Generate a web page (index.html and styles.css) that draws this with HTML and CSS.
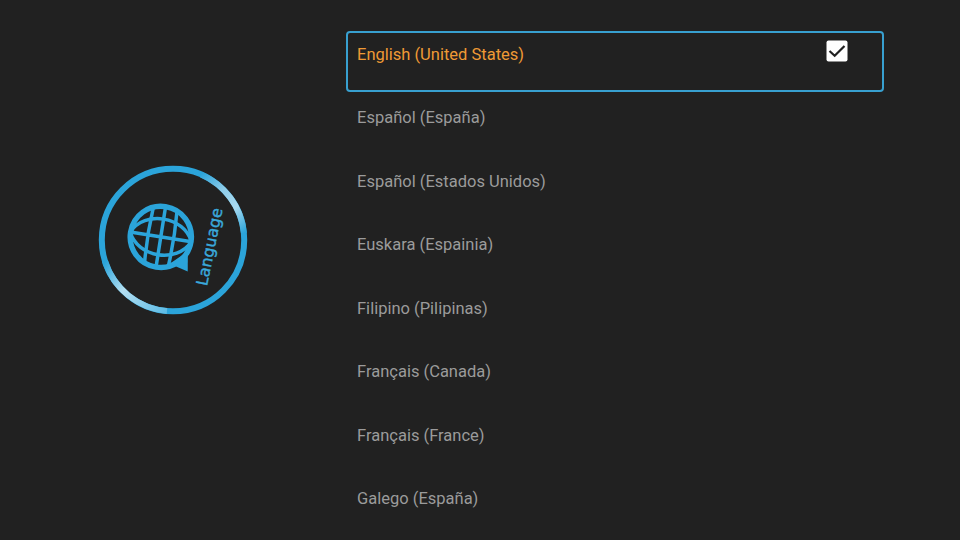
FILE: index.html
```html
<!DOCTYPE html>
<html lang="en">
<head>
    <meta charset="UTF-8">
    <meta name="viewport" content="width=device-width, initial-scale=1.0">
    <title>Language</title>
    <link rel="stylesheet" href="styles.css">
</head>
<body>

    <div class="screen">
        <!-- Round section badge -->
        <div class="badge">
            <svg class="badge-icon" viewBox="0 0 150 150">
                <defs>
                    <linearGradient id="shine-top" x1="103" y1="9" x2="146" y2="68" gradientUnits="userSpaceOnUse">
                        <stop offset="0" stop-color="#2ba4da"/>
                        <stop offset="0.35" stop-color="#8fcdea"/>
                        <stop offset="0.65" stop-color="#a9daf0"/>
                        <stop offset="1" stop-color="#2ba4da"/>
                    </linearGradient>
                    <linearGradient id="shine-bottom" x1="8" y1="96" x2="70" y2="146" gradientUnits="userSpaceOnUse">
                        <stop offset="0" stop-color="#2ba4da"/>
                        <stop offset="0.4" stop-color="#b4dff2"/>
                        <stop offset="1" stop-color="#5cbbe5"/>
                    </linearGradient>
                </defs>
                <circle class="ring" cx="75" cy="75" r="71.2"/>
                <path class="ring" stroke="url(#shine-top)" d="M103 9.5A71.2 71.2 0 0 1 145.9 68"/>
                <path class="ring" stroke="url(#shine-bottom)" d="M7 96A71.2 71.2 0 0 0 69 146"/>
                <g class="globe" transform="translate(62.8 71.9) rotate(9)">
                    <circle class="globe-rim" r="30.6"/>
                    <path d="M-31 0H31M0-31V31M-12-28Q-14 0-12 28M12-28Q14 0 12 28"/>
                    <path d="M-31 0C-20-24 20-24 31 0C20 24-20 24-31 0"/>
                    <path class="globe-tail" d="M13 25L32 30L29 10Z"/>
                </g>
                <text class="badge-text" transform="translate(109 121.6) rotate(-78.6)" textLength="79">Language</text>
            </svg>
        </div>

        <!-- Language list -->
        <ul class="languages">
            <li class="language selected">
                <span>English (United States)</span>
                <svg class="check" viewBox="0 0 22 22">
                    <rect x="0.5" y="0.5" width="21" height="21" rx="2"/>
                    <path d="M3.5 11L8.7 15.8L18.5 6"/>
                </svg>
            </li>
            <li class="language">Español (España)</li>
            <li class="language">Español (Estados Unidos)</li>
            <li class="language">Euskara (Espainia)</li>
            <li class="language">Filipino (Pilipinas)</li>
            <li class="language">Français (Canada)</li>
            <li class="language">Français (France)</li>
            <li class="language">Galego (España)</li>
        </ul>
    </div>

</body>
</html>
```

FILE: styles.css
```css
/* General Styles */
body {
    margin: 0;
    background-color: #212121;
    color: #9b9b9b;
    font-family: Roboto, sans-serif;
    overflow: hidden;
}

.screen {
    display: flex;
    height: 540px;
}

/* Badge */
.badge {
    width: 346px;
    padding-top: 164.5px;
    box-sizing: border-box;
}

.badge-icon {
    display: block;
    width: 150px;
    height: 150px;
    margin-left: 97.5px;
}

.ring {
    fill: none;
    stroke-width: 6;
}

circle.ring {
    stroke: #2ba4da;
}

.globe {
    fill: none;
    stroke: #2ba4da;
    stroke-width: 3.5;
}

.globe-rim {
    stroke-width: 5.4;
}

.globe-tail {
    fill: #2ba4da;
    stroke: none;
}

.badge-text {
    fill: #3aa9dc;
    stroke: #3aa9dc;
    stroke-width: 0.4;
    font-family: "DejaVu Sans", sans-serif;
    font-size: 15.8px;
}

/* Language list */
.languages {
    width: 538px;
    margin: 0;
    padding: 31px 0 0;
    list-style-type: none;
}

.language {
    display: flex;
    justify-content: space-between;
    align-items: flex-start;
    box-sizing: border-box;
    height: 63.5px;
    padding: 14px 35px 0 11px;
    font-size: 16.5px;
    line-height: 20px;
}

.selected {
    height: 61px;
    margin-bottom: 2px;
    padding: 12px 34px 0 9px;
    border: 2px solid #38a0d0;
    border-radius: 4px;
    color: #ef9a35;
}

.check {
    width: 22px;
    height: 22px;
    margin-top: -5px;
}

.check rect {
    fill: #fff;
}

.check path {
    fill: none;
    stroke: #212121;
    stroke-width: 2.2;
}
```
